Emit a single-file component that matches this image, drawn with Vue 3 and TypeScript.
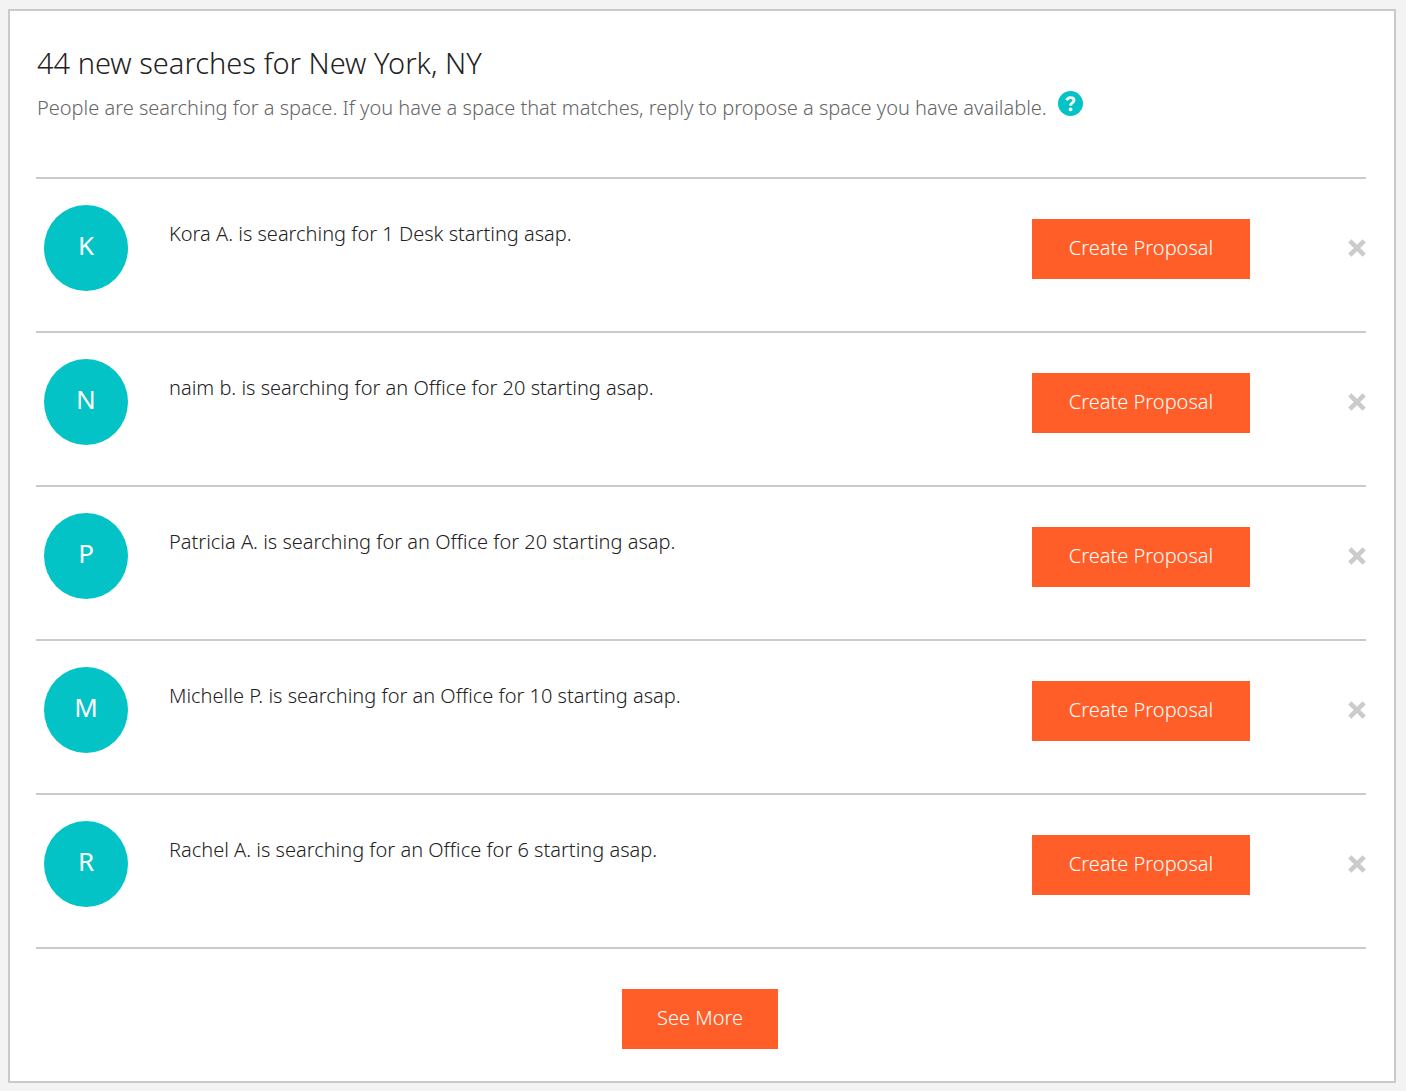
<script setup lang="ts">
import { ref } from 'vue'

interface Search {
  id: number
  name: string
  need: string
}

const searches = ref<Search[]>([
  { id: 1, name: 'Kora A.', need: '1 Desk' },
  { id: 2, name: 'naim b.', need: 'an Office for 20' },
  { id: 3, name: 'Patricia A.', need: 'an Office for 20' },
  { id: 4, name: 'Michelle P.', need: 'an Office for 10' },
  { id: 5, name: 'Rachel A.', need: 'an Office for 6' },
])

const initial = (name: string): string => name.charAt(0).toUpperCase()

function dismiss(id: number): void {
  searches.value = searches.value.filter((s) => s.id !== id)
}
</script>

<template>
  <main class="card">
    <header class="head">
      <h1 class="title">44 new searches for New York, NY</h1>
      <div class="intro">
        <p class="lead">People are searching for a space. If you have a space that matches, reply to propose a space you have available.</p>
        <button class="help" type="button" aria-label="Help">
          <svg viewBox="0 0 24 24" width="25" height="25" aria-hidden="true">
            <circle cx="12" cy="12" r="12" fill="#03c3c6" />
            <path d="M8.2 8.9C9 7.1 10.4 6.3 12 6.3C14.1 6.3 15.4 7.5 15.4 9C15.4 11.3 12.1 11.3 12.1 14.2" fill="none" stroke="#fff" stroke-width="2.7" />
            <circle cx="12.1" cy="17.7" r="1.8" fill="#fff" />
          </svg>
        </button>
      </div>
    </header>

    <ul class="list">
      <li v-for="s in searches" :key="s.id" class="row">
        <span class="avatar">{{ initial(s.name) }}</span>
        <p class="text">{{ s.name }} is searching for {{ s.need }} starting asap.</p>
        <button class="btn" type="button">Create Proposal</button>
        <button class="close" type="button" aria-label="Dismiss" @click="dismiss(s.id)">
          <svg viewBox="0 0 18 18" width="18" height="18" aria-hidden="true">
            <path d="M1.8 1.8L16.2 16.2M16.2 1.8L1.8 16.2" stroke="#cbcbcb" stroke-width="4.5" />
          </svg>
        </button>
      </li>
    </ul>

    <footer class="foot">
      <button class="btn more" type="button">See More</button>
    </footer>
  </main>
</template>

<style>
body {
  margin: 0;
  background: #f3f3f3;
}
</style>

<style scoped>
.card {
  margin: 9px 10px 8px 8px;
  padding: 32px 28px 32px 26px;
  border: 2px solid #cacaca;
  background: #fff;
  color: #222;
  font-family: "Noto Sans", "Open Sans", sans-serif;
  font-weight: 300;
  font-size: 20px;
  line-height: 28px;
}

.head {
  padding: 0 0 55px 1px;
}

.title {
  margin: 0;
  font-size: 29px;
  font-weight: 300;
  line-height: 40px;
}

.intro {
  display: flex;
  align-items: flex-start;
  gap: 11px;
  padding-top: 8px;
}

.lead {
  margin: 3px 0 0;
  color: #666;
}

.help,
.close {
  display: block;
  flex: none;
  padding: 0;
  border: 0;
  background: none;
  cursor: pointer;
}

.help svg,
.close svg {
  display: block;
}

.list {
  margin: 0;
  padding: 0;
  list-style: none;
  border-bottom: 2px solid #cacaca;
}

.row {
  display: flex;
  align-items: flex-start;
  height: 126px;
  padding: 26px 0 0 8px;
  border-top: 2px solid #cacaca;
}

.avatar {
  flex: none;
  width: 84px;
  height: 86px;
  border-radius: 50%;
  background: #03c3c6;
  color: #fff;
  font-size: 26px;
  font-weight: 400;
  line-height: 80px;
  text-align: center;
}

.text {
  flex: 1;
  margin: 15px 0 0 41px;
}

.btn {
  flex: none;
  width: 218px;
  height: 60px;
  margin-top: 14px;
  padding: 0 0 2px;
  border: 0;
  background: #ff5e28;
  color: #fff;
  font: inherit;
  cursor: pointer;
}

.close {
  margin: 34px 0 0 98px;
}

.foot {
  display: flex;
  justify-content: center;
  padding: 26px 2px 0 0;
}

.more {
  width: 156px;
}
</style>
